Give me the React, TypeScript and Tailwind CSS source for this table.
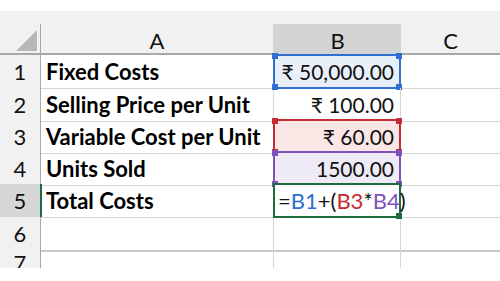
import React from 'react';

type Rng = { color: string; fill: string; handles: ('tl' | 'tr' | 'bl' | 'br')[] };

const ranges: Record<string, Rng> = {
  blue: { color: 'border-[#2e6fd0]', fill: 'bg-[#e8eff9]', handles: ['tl', 'tr', 'bl', 'br'] },
  red: { color: 'border-[#c42b32]', fill: 'bg-[#fbe6e6]', handles: ['tl', 'tr', 'bl', 'br'] },
  purple: { color: 'border-[#7d52bd]', fill: 'bg-[#eeeaf6]', handles: ['tl', 'tr', 'bl', 'br'] },
  green: { color: 'border-[#1f6b40]', fill: 'bg-white', handles: ['br'] },
};

const handleBg: Record<string, string> = {
  blue: 'bg-[#2e6fd0]',
  red: 'bg-[#c42b32]',
  purple: 'bg-[#7d52bd]',
  green: 'bg-[#1f6b40]',
};

const handlePos = {
  tl: '-left-[3px] -top-[3px]',
  tr: '-right-[3px] -top-[3px]',
  bl: '-left-[3px] -bottom-[3px]',
  br: '-right-[3px] -bottom-[3px]',
};

const RangeBox = ({ kind }: { kind: string }) => {
  const r = ranges[kind];
  return (
    <div className={`absolute -inset-px border-2 ${r.color} ${r.fill}`}>
      {r.handles.map((h) => (
        <span key={h} className={`absolute w-[6px] h-[6px] ${handlePos[h]} ${handleBg[kind]}`} />
      ))}
    </div>
  );
};

const rows = [
  { n: '1', label: 'Fixed Costs', value: '₹ 50,000.00', range: 'blue', h: 'h-[33px]' },
  { n: '2', label: 'Selling Price per Unit', value: '₹ 100.00', range: '', h: 'h-[32px]' },
  { n: '3', label: 'Variable Cost per Unit', value: '₹ 60.00', range: 'red', h: 'h-[32px]' },
  { n: '4', label: 'Units Sold', value: '1500.00', range: 'purple', h: 'h-[32px]' },
];

export default function App() {
  return (
    <div className="w-[500px] h-[281px] bg-white overflow-hidden text-[#111]" style={{ fontFamily: 'Lato, "Noto Sans", sans-serif' }}>
      <div className="h-[11px] bg-white" />
      <div className="h-[13px] bg-[#f1f1f1]" />

      {/* column headers */}
      <div className="grid grid-cols-[41px_233px_127px_99px] h-[31px] bg-[#f1f1f1] border-b-2 border-[#a8a8a8]">
        <div className="relative border-r border-[#a8a8a8]">
          <svg className="absolute left-[16px] top-[6px]" width="21" height="21" viewBox="0 0 21 21">
            <polygon points="21,0 21,21 0,21" fill="#b8b8b8" />
          </svg>
        </div>
        <div className="flex items-center justify-center text-[22px] border-r border-[#d6d6d6]">A</div>
        <div className="flex items-center justify-center text-[22px] bg-[#d3d3d3] border-b-2 border-[#1f6b40] -mb-[2px]">B</div>
        <div className="flex items-center justify-center text-[22px]">C</div>
      </div>

      {rows.map((r) => (
        <div key={r.n} className={`grid grid-cols-[41px_233px_127px_99px] ${r.h}`}>
          <div className="flex items-center justify-center text-[22px] bg-[#f1f1f1] border-r border-b border-r-[#a8a8a8] border-b-[#d3d3d3]">{r.n}</div>
          <div className="flex items-center pl-[5px] text-[22px] font-bold text-black border-r border-b border-[#d6d6d6] whitespace-nowrap">{r.label}</div>
          <div className="relative border-r border-b border-[#d6d6d6]">
            {r.range && <RangeBox kind={r.range} />}
            <div className="relative flex items-center justify-end h-full pr-[6px] text-[21px] whitespace-nowrap">{r.value}</div>
          </div>
          <div className="border-b border-[#d6d6d6]" />
        </div>
      ))}

      {/* row 5, editing */}
      <div className="grid grid-cols-[41px_233px_127px_99px] h-[33px]">
        <div className="flex items-center justify-center text-[22px] bg-[#d6d6d6] border-r-2 border-b border-r-[#1f6b40] border-b-[#c8c8c8] -mr-px">5</div>
        <div className="flex items-center pl-[5px] text-[22px] font-bold text-black border-r border-b border-[#d6d6d6]">Total Costs</div>
        <div className="relative border-r border-b border-[#d6d6d6]">
          <RangeBox kind="green" />
          <div className="relative flex items-center h-full pl-[4px] text-[22px] whitespace-nowrap">
            <span>=</span>
            <span className="text-[#2e6fd0]">B1</span>
            <span>+(</span>
            <span className="text-[#c42b32]">B3</span>
            <span>*</span>
            <span className="text-[#7d52bd]">B4</span>
            <span>)</span>
            <span className="inline-block w-[2px] h-[24px] bg-black ml-[1px]" />
          </div>
        </div>
        <div className="border-b border-[#d6d6d6]" />
      </div>

      <div className="grid grid-cols-[41px_233px_127px_99px] h-[32px]">
        <div className="flex items-center justify-center text-[22px] bg-[#f1f1f1] border-r border-r-[#a8a8a8] border-b-2 border-b-[#c8c8c8]">6</div>
        <div className="border-r border-b-2 border-r-[#d6d6d6] border-b-[#c8c8c8]" />
        <div className="border-r border-b-2 border-r-[#d6d6d6] border-b-[#c8c8c8]" />
        <div className="border-b-2 border-[#c8c8c8]" />
      </div>

      <div className="grid grid-cols-[41px_233px_127px_99px] h-[19px] overflow-hidden">
        <div className="flex justify-center text-[22px] leading-[28px] bg-[#f1f1f1] border-r border-[#a8a8a8]">7</div>
        <div className="border-r border-[#d6d6d6]" />
        <div className="border-r border-[#d6d6d6]" />
        <div />
      </div>
    </div>
  );
}
